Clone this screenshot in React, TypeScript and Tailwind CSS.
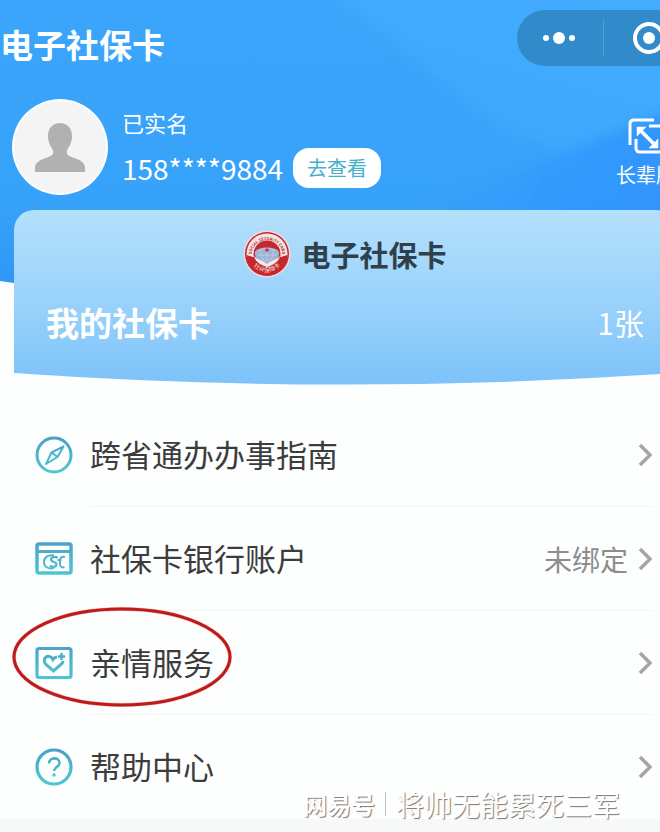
import React from "react";

type MenuItem = {
  id: string;
  label: string;
  value?: string;
  icon: React.ReactNode;
  circled?: boolean;
};

const IconGradient = ({ id }: { id: string }) => (
  <defs>
    <linearGradient id={id} x1="0" y1="0" x2="0" y2="36" gradientUnits="userSpaceOnUse">
      <stop offset="0" stopColor="#4b9fc9" />
      <stop offset="1" stopColor="#4cc8d2" />
    </linearGradient>
  </defs>
);

const CompassIcon = () => (
  <svg viewBox="0 0 38 38" className="size-[38px]" fill="none" stroke="url(#compass)">
    <IconGradient id="compass" />
    <circle cx="19" cy="19" r="17" strokeWidth="3" />
    <path d="M28.500 10.500 22.500 21 11 28 16.500 16.500Z" strokeWidth="2" strokeLinejoin="round" />
    <path d="M16.500 16.500 22.500 21" strokeWidth="2" />
  </svg>
);

const BankCardIcon = () => (
  <svg viewBox="0 0 38 38" className="size-[38px]" fill="none" stroke="url(#bank)">
    <IconGradient id="bank" />
    <rect x="2" y="4" width="34" height="29" rx="2" strokeWidth="3.500" />
    <path d="M2 11.500H36" strokeWidth="3" />
    <path d="M19 15.500C13 14.500 9 17.500 9 22s4 7.500 10 6" strokeWidth="2" />
    <path d="M22.500 18c-2-2-6.500-1-6.500 1.500 0 3 6 2 5.500 5-.5 3-5 3-6.500 1" strokeWidth="2.200" />
    <path d="M30 17c-3.500-1-5 1-5 4v3c0 3 2 4 4.500 3M22.500 20h4" strokeWidth="2" />
  </svg>
);

const HeartCardIcon = () => (
  <svg viewBox="0 0 38 38" className="size-[38px]" fill="none" stroke="url(#heart)">
    <IconGradient id="heart" />
    <rect x="2" y="4.500" width="34" height="29" rx="2" strokeWidth="3.200" />
    <path
      d="M22 13c-2 0-3 1-4 2.500-1.500-3-4.500-4-7-2.500-2.500 2-2 5.500 0 7.500l7.500 6.500 8-7c1-1 1.500-2 1.500-3"
      strokeWidth="3"
    />
    <path d="M26.500 9v7M23 12.500h7" strokeWidth="2.400" />
  </svg>
);

const HelpIcon = () => (
  <svg viewBox="0 0 38 38" className="size-[38px]" fill="none" stroke="url(#help)">
    <IconGradient id="help" />
    <circle cx="19" cy="19" r="17" strokeWidth="3.200" />
    <path d="M14 15.500c0-7 10.500-6.500 10.500-.5 0 4-5.500 4-5.500 8" strokeWidth="2.600" />
    <circle cx="19" cy="27" r="1.800" fill="#4cc8d2" stroke="none" />
  </svg>
);

const menuItems: Array<MenuItem> = [
  { id: "guide", label: "跨省通办办事指南", icon: <CompassIcon /> },
  { id: "bank", label: "社保卡银行账户", value: "未绑定", icon: <BankCardIcon /> },
  { id: "family", label: "亲情服务", icon: <HeartCardIcon />, circled: true },
  { id: "help", label: "帮助中心", icon: <HelpIcon /> },
];

const Seal = () => (
  <svg viewBox="0 0 48 48" className="size-12 shrink-0">
    <circle cx="24" cy="24" r="23.500" fill="#f3d9de" />
    <circle cx="24" cy="24" r="22" fill="#c4282f" />
    <circle cx="24" cy="24" r="20.500" fill="#f5e6e4" />
    <path d="M3.500 25A20.500 20.500 0 0 0 44.500 25L38 27H10Z" fill="#c4282f" />
    <circle cx="24" cy="24" r="13.500" fill="#c4282f" />
    <path d="M12 22c2-6 22-6 24 0 1 6-5 12-12 12S11 28 12 22Z" fill="#9db4d6" />
    <path
      d="M15 21c4-3 14-3 18 0M14 25h20M24 18v14M18 19c-1 5 1 10 4 12M30 19c1 5-1 10-4 12"
      fill="none"
      stroke="#c3d0e6"
      strokeWidth="0.800"
    />
    <path d="M11 26c3 4 9 4 13 8 4-4 10-4 13-8-1 6-7 9-13 11-6-2-12-5-13-11Z" fill="#f6e9ea" />
    <circle cx="24" cy="20" r="1.800" fill="#d0303a" />
    <path id="sealTop" d="M8.500 25.500A15.500 15.500 0 1 1 39.500 25.500" fill="none" />
    <path id="sealBottom" d="M7 31A18.800 18.800 0 0 0 41 31" fill="none" />
    <text className="fill-[#b3262e] font-bold" fontSize="4" textAnchor="middle">
      <textPath href="#sealTop" startOffset="50%">SOCIAL SECURITY CARD</textPath>
    </text>
    <text className="fill-[#f7dcdc]" fontSize="6" textAnchor="middle">
      <textPath href="#sealBottom" startOffset="50%">社会保障卡</textPath>
    </text>
  </svg>
);

const HeaderBackdrop = () => (
  <svg viewBox="0 0 660 283" preserveAspectRatio="none" className="absolute inset-0 h-full w-full">
    <defs>
      <linearGradient id="sky" x1="0" y1="0" x2="0" y2="1">
        <stop offset="0" stopColor="#3ba5fb" />
        <stop offset="0.65" stopColor="#37a2f9" />
        <stop offset="1" stopColor="#2d95f7" />
      </linearGradient>
      <linearGradient id="facet" x1="0.300" y1="0.700" x2="0.700" y2="0">
        <stop offset="0" stopColor="#3ea8fd" />
        <stop offset="1" stopColor="#43acff" />
      </linearGradient>
      <linearGradient id="deep" x1="0" y1="0" x2="1" y2="0.300">
        <stop offset="0" stopColor="#37a2fb" />
        <stop offset="1" stopColor="#2c8ffd" />
      </linearGradient>
      <filter id="soften">
        <feGaussianBlur stdDeviation="6" />
      </filter>
    </defs>
    <path d="M0 0H660V281Q330 330 0 281Z" fill="url(#sky)" />
    <g filter="url(#soften)">
      <path d="M340 -20H680V110L562 150 500 130Q430 70 340 0Z" fill="url(#facet)" />
      <path d="M430 210 540 165 680 105V283H430Z" fill="url(#deep)" opacity="0.700" />
    </g>
  </svg>
);

const Header = () => (
  <header className="relative pt-2.5 pb-[88px] text-white">
    <HeaderBackdrop />
    <div className="relative flex items-start justify-between">
      <h1 className="mt-1.5 mb-0.5 text-[33px] leading-[56px] font-bold">电子社保卡</h1>
      <div className="-mr-10 flex h-14 w-[183px] items-center rounded-full bg-[#318ac9] pl-6">
        <button type="button" aria-label="更多" className="flex w-9 items-center justify-center gap-1">
          <span className="size-1.5 rounded-full bg-white" />
          <span className="size-3 rounded-full bg-white" />
          <span className="size-1.5 rounded-full bg-white" />
        </button>
        <span className="ml-[26px] h-9 w-px bg-[#4f9fd6]" />
        <button type="button" aria-label="关闭" className="ml-7">
          <svg viewBox="0 0 34 34" className="size-[34px]" fill="none">
            <circle cx="17" cy="17" r="14" stroke="#fff" strokeWidth="4" />
            <circle cx="17" cy="17" r="6" fill="#fff" />
          </svg>
        </button>
      </div>
    </div>
    <div className="relative mt-[25px] flex items-start pl-3">
      <svg viewBox="0 0 96 96" className="size-24 shrink-0">
        <circle cx="48" cy="48" r="48" fill="#fcfeff" />
        <circle cx="48" cy="48" r="46" fill="#f4f4f4" />
        <path
          d="M48 24c-7 0-12 5-12 13 0 7 3 11 5 14 1 5-2 6-7 8-7 2-11 5-11 10v3q0 1 1 1h48q1 0 1-1v-3c0-5-4-8-11-10-5-2-8-3-7-8 2-3 5-7 5-14 0-8-5-13-12-13Z"
          fill="#b1b1b1"
        />
      </svg>
      <div className="ml-3.5 flex flex-col gap-3.5 pt-[7px]">
        <p className="text-[22px] leading-8">已实名</p>
        <div className="flex h-8 items-center">
          <p className="text-[28px] leading-8">158****9884</p>
          <button
            type="button"
            className="ml-2.5 h-10 rounded-2xl bg-white px-3.5 text-xl text-[#46b0c8]"
          >
            去查看
          </button>
        </div>
      </div>
      <button type="button" className="mt-[18px] -mr-4 ml-auto flex shrink-0 flex-col items-center">
        <svg viewBox="0 0 38 38" className="size-[38px]" fill="none" stroke="#fff" strokeWidth="3">
          <path d="M3 28V7q0-4 4-4H27" />
          <path d="M22 9H32q4 0 4 4V31q0 4-4 4H13q-4 0-4-4V22" />
          <path d="M13 13 28 28" strokeWidth="3.500" />
          <path d="M10 19V10H19ZM31 22V31H22Z" fill="#fff" strokeWidth="0.500" />
        </svg>
        <span className="mt-1 text-xl leading-8">长辈版</span>
      </button>
    </div>
  </header>
);

const SocialCard = () => (
  <section className="relative -mt-[73px] -mr-4 ml-3.5 overflow-hidden rounded-t-[20px] bg-linear-to-b from-[#b4e0fb] via-[#9bd3fb] to-[#7cc2f9] pt-5 pb-[39px]">
    <div className="flex items-center justify-center gap-2.5">
      <Seal />
      <h2 className="text-[29px] leading-12 font-bold text-[#2f3f4c]">电子社保卡</h2>
    </div>
    <div className="mt-5 flex items-center justify-between px-8 text-white">
      <p className="text-[33px] leading-12 font-bold">我的社保卡</p>
      <p className="text-[30px] leading-12">1张</p>
    </div>
    <svg
      viewBox="0 0 100 12"
      preserveAspectRatio="none"
      className="absolute bottom-0 left-0 h-3 w-full fill-[#fdfefe]"
    >
      <path d="M0 0Q50 23 100 0V12H0Z" />
    </svg>
  </section>
);

const MenuRow = ({ item }: { item: MenuItem }) => (
  <li className="group relative">
    <button type="button" className="flex w-full items-center pl-[21px] text-left">
      {item.icon}
      <span className="mr-6 ml-[17px] flex h-26 flex-1 items-center border-b border-[#f3f4f4] group-last:border-transparent">
        <span className="text-[31px] text-[#3c3c3c]">{item.label}</span>
        <span className="ml-auto text-[28px] text-[#8d8d8d]">{item.value}</span>
        <svg viewBox="0 0 14 24" className="ml-2.5 h-6 w-3.5" fill="none">
          <path d="M2 2 12 12 2 22" stroke="#a5a5a5" strokeWidth="3.500" />
        </svg>
      </span>
    </button>
    {item.circled && (
      <svg
        viewBox="0 0 220 100"
        className="pointer-events-none absolute -top-1 -left-0.5 h-[100px] w-[220px]"
        fill="none"
      >
        <ellipse cx="110" cy="50" rx="108" ry="48" stroke="#f3b7b0" strokeWidth="4" />
        <ellipse cx="110" cy="50" rx="108" ry="48" stroke="#bd1a1c" strokeWidth="3" />
      </svg>
    )}
  </li>
);

const App = () => {
  return (
    <div className="relative min-h-screen overflow-hidden bg-[#f7f8fa] font-['Noto_Sans_CJK_SC',sans-serif]">
      <div className="bg-[#fdfefe]">
        <Header />
        <SocialCard />
        <ul className="-mr-4 ml-3.5 pt-[18px]">
          {menuItems.map((item) => (
            <MenuRow key={item.id} item={item} />
          ))}
        </ul>
      </div>
      <div className="absolute right-10 bottom-2 flex items-center text-white [text-shadow:1px_1px_1px_#777]">
        <span className="text-2xl leading-10 font-bold">网易号</span>
        <span className="mx-2.5 h-6 w-px bg-[#c4c4c4]" />
        <span className="text-[28px] leading-10">将帅无能累死三军</span>
      </div>
    </div>
  );
};

export default App;
